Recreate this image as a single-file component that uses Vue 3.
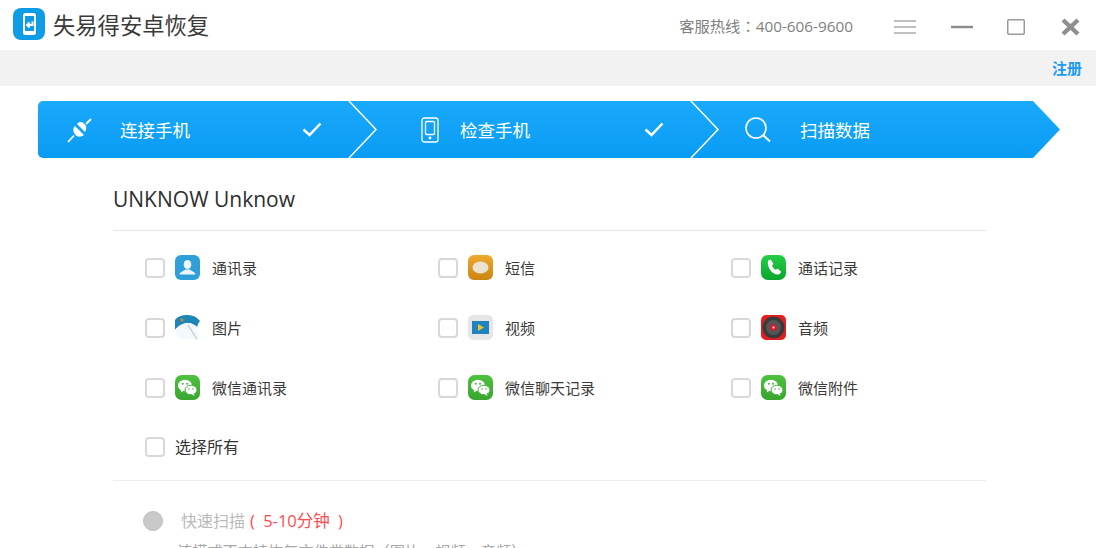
<script setup>
const rows = [
  [{ label: '通讯录', icon: 'contact' }, { label: '短信', icon: 'sms' }, { label: '通话记录', icon: 'phone' }],
  [{ label: '图片', icon: 'photo' }, { label: '视频', icon: 'video' }, { label: '音频', icon: 'audio' }],
  [{ label: '微信通讯录', icon: 'wechat' }, { label: '微信聊天记录', icon: 'wechat' }, { label: '微信附件', icon: 'wechat' }]
]
const items = rows.flat()
</script>

<template>
  <div class="page">
    <header class="titlebar">
      <div class="brand">
        <svg class="logo" viewBox="0 0 32 32" width="32" height="32">
          <rect width="32" height="32" rx="8" fill="#0e9ce6" />
          <rect x="10" y="5" width="13" height="22" rx="2.5" fill="#fff" />
          <rect x="12" y="8" width="9" height="15" fill="#0e9ce6" />
          <path d="M19.5 13.5v3.5h-5M16.5 14.5l-2.5 2.5 2.5 2.5" fill="none" stroke="#fff" stroke-width="2" />
        </svg>
        <span class="app-name">失易得安卓恢复</span>
      </div>
      <div class="win">
        <span class="hotline">客服热线：400-606-9600</span>
        <svg class="w-menu" width="22" height="14" viewBox="0 0 22 14"><path d="M0 1h22M0 7h22M0 13h22" stroke="#aaa" stroke-width="1.4" /></svg>
        <svg class="w-min" width="22" height="4" viewBox="0 0 22 4"><path d="M0 2h22" stroke="#8c8c8c" stroke-width="2.4" /></svg>
        <svg class="w-max" width="18" height="16" viewBox="0 0 18 16"><rect x=".75" y=".75" width="16.5" height="14.5" rx="1" fill="none" stroke="#9a9a9a" stroke-width="1.5" /></svg>
        <svg class="w-close" width="19" height="18" viewBox="0 0 19 18"><path d="M2 2l15 14M17 2L2 16" stroke="#8f8f8f" stroke-width="4.4" /></svg>
      </div>
    </header>

    <div class="subbar"><a class="register">注册</a></div>

    <nav class="stepper">
      <div class="step s1">
        <svg class="step-icon" width="25" height="26" viewBox="0 0 25 26" fill="#fff">
          <path d="M8 9l9 9c-2.5 2-5 2-7.5 1L7 16c-1-3-1-5 1-7zM10 7l8 8c1.5-2.5 1.5-5 .5-7L15.5 5.5C13.5 4.5 12 5 10 7z" />
          <path d="M19 7l5-5M7 18.5L1 25" stroke="#fff" stroke-width="1.8" fill="none" />
        </svg>
        <span class="step-label">连接手机</span>
        <svg class="check" width="20" height="15" viewBox="0 0 20 15"><path d="M1.5 7.5l6 5.5L18.5 1.5" fill="none" stroke="#fff" stroke-width="2.5" /></svg>
        <svg class="chevron" width="30" height="59" viewBox="0 0 30 59"><path d="M0 0l28 29.5L0 59" fill="none" stroke="#fff" stroke-width="1.5" /></svg>
      </div>
      <div class="step s2">
        <svg class="step-icon" width="18" height="26" viewBox="0 0 18 26" fill="none" stroke="#fff" stroke-width="1.3">
          <rect x="1" y="1" width="16" height="24" rx="2.5" />
          <rect x="4.5" y="4.5" width="9" height="13" rx="1" />
          <circle cx="9" cy="21" r=".8" fill="#fff" />
        </svg>
        <span class="step-label">检查手机</span>
        <svg class="check" width="20" height="15" viewBox="0 0 20 15"><path d="M1.5 7.5l6 5.5L18.5 1.5" fill="none" stroke="#fff" stroke-width="2.5" /></svg>
        <svg class="chevron" width="30" height="59" viewBox="0 0 30 59"><path d="M0 0l28 29.5L0 59" fill="none" stroke="#fff" stroke-width="1.5" /></svg>
      </div>
      <div class="step s3">
        <svg class="step-icon" width="26" height="26" viewBox="0 0 26 26" fill="none" stroke="#fff">
          <circle cx="11" cy="11" r="10" stroke-width="1.6" />
          <path d="M18 18l7 6.5" stroke-width="2" />
        </svg>
        <span class="step-label">扫描数据</span>
      </div>
    </nav>

    <main class="panel">
      <h2 class="device">UNKNOW Unknow</h2>
      <section class="types">
        <label v-for="item in items" :key="item.label" class="type">
          <span class="box"></span>
          <svg v-if="item.icon === 'contact'" class="t-icon" viewBox="0 0 25 25">
            <rect width="25" height="25" rx="6" fill="#2f9fd8" />
            <ellipse cx="12.5" cy="9.5" rx="3.8" ry="4.5" fill="#eef6fb" />
            <path d="M4.5 19.5c0-2.5 4.5-3.5 6-5h4c1.5 1.5 6 2.5 6 5z" fill="#eef6fb" />
          </svg>
          <svg v-else-if="item.icon === 'sms'" class="t-icon" viewBox="0 0 25 25">
            <defs><linearGradient id="smsg" x1="0" y1="0" x2="0" y2="1"><stop offset="0" stop-color="#eeaa2c" /><stop offset="1" stop-color="#c98412" /></linearGradient></defs>
            <rect width="25" height="25" rx="6" fill="url(#smsg)" />
            <ellipse cx="12.5" cy="12.5" rx="8" ry="6" fill="#ebe3cf" />
          </svg>
          <svg v-else-if="item.icon === 'phone'" class="t-icon" viewBox="0 0 25 25">
            <defs><linearGradient id="phg" x1="0" y1="0" x2="0" y2="1"><stop offset="0" stop-color="#25cf46" /><stop offset="1" stop-color="#0aa52e" /></linearGradient></defs>
            <rect width="25" height="25" rx="7" fill="url(#phg)" />
            <path d="M7 5.5l2.8-1 2.7 4.5-1.500 1.500c.5 1.800 2 3.500 3.800 4.300l1.700-1.300 3.500 3-1 2.500C13 21.500 5.500 13.500 7 5.500z" fill="#fff" />
          </svg>
          <svg v-else-if="item.icon === 'photo'" class="t-icon" viewBox="0 0 25 25">
            <path d="M0 5C2 2 6 0 13 0c5 0 9 2 12 6-1 1-2 3-3 6-2-2-6-4-9-4C8 8 3 11 0 15z" fill="#1f87b8" />
            <path d="M0 15c3-4 8-7 13-7 3 0 7 2 9 4 1 4 1 8 1 12H8C3 23 0 20 0 15z" fill="#f4fafc" />
            <path d="M13 10l9 14" stroke="#b5c9d1" stroke-width="1.2" />
            <circle cx="7" cy="5" r="1.5" fill="#e48220" />
          </svg>
          <svg v-else-if="item.icon === 'video'" class="t-icon" viewBox="0 0 25 25">
            <rect width="25" height="25" rx="5" fill="#e6e6e8" />
            <rect x="4" y="6" width="17" height="13" fill="#1d84c0" />
            <path d="M10 9v7l6-3.500z" fill="#f3c11b" />
          </svg>
          <svg v-else-if="item.icon === 'audio'" class="t-icon" viewBox="0 0 25 25">
            <rect width="25" height="25" rx="5" fill="#e41e1e" />
            <circle cx="12.5" cy="12.5" r="11" fill="#3a3a3a" />
            <circle cx="12.5" cy="12.5" r="7.5" fill="#555" />
            <circle cx="12.5" cy="12.5" r="3.2" fill="#e4162a" />
            <circle cx="12.5" cy="12.5" r="1" fill="#fff" />
          </svg>
          <svg v-else class="t-icon" viewBox="0 0 25 25">
            <defs><linearGradient id="wxg" x1="0" y1="0" x2="0" y2="1"><stop offset="0" stop-color="#4fc13f" /><stop offset="1" stop-color="#38a52f" /></linearGradient></defs>
            <rect width="25" height="25" rx="6.5" fill="url(#wxg)" />
            <ellipse cx="10" cy="10.5" rx="7" ry="5.8" fill="#fff" />
            <path d="M6.5 14.5l-.8 3 3.300-2z" fill="#fff" />
            <ellipse cx="16" cy="15" rx="6" ry="4.8" fill="#fff" stroke="#42b338" stroke-width="1" />
            <path d="M18.5 19l1.300 2-3.300-1.500z" fill="#fff" />
            <circle cx="7.8" cy="8.8" r="1" fill="#42b338" /><circle cx="12" cy="8.8" r="1" fill="#42b338" />
            <circle cx="14" cy="14" r=".8" fill="#42b338" /><circle cx="18" cy="14" r=".8" fill="#42b338" />
          </svg>
          <span class="t-label">{{ item.label }}</span>
        </label>
      </section>
      <label class="select-all"><span class="box"></span><span class="all-label">选择所有</span></label>
      <section class="scan">
        <div class="scan-head">
          <span class="radio"></span>
          <span class="scan-title">快速扫描</span>
          <span class="scan-time">( 5-10分钟 )</span>
        </div>
        <p class="scan-note">该模式不支持恢复文件类数据（图片、视频、音频）</p>
      </section>
    </main>
  </div>
</template>

<style>
html, body { margin: 0; background: #fff; overflow: hidden; }
</style>

<style scoped>
.page {
  width: 1096px;
  height: 548px;
  overflow: hidden;
  background: #fff;
  font-family: "Noto Sans CJK SC", "Open Sans", sans-serif;
  color: #333;
}
.titlebar {
  height: 50px;
  display: flex;
  align-items: center;
  justify-content: space-between;
  padding: 0 16px 0 13px;
}
.brand { display: flex; align-items: center; gap: 8px; margin-top: 3px; }
.logo { display: block; margin-top: -5px; }
.app-name { font-size: 22.3px; color: #3a3a3a; line-height: 30px; margin-top: -5px; }
.win { display: flex; align-items: center; margin-top: 4px; }
.hotline {
  font-family: "Open Sans", "Noto Sans CJK TC", sans-serif;
  font-size: 15.3px;
  color: #808080;
  margin: 0 41px 5px 0;
}
.w-menu { margin-right: 35px; }
.w-min { margin-right: 34px; }
.w-max { margin-right: 36px; }
.subbar {
  height: 36px;
  background: #f2f2f2;
  display: flex;
  align-items: center;
  justify-content: flex-end;
  padding-right: 14px;
}
.register { font-size: 15px; font-weight: 700; color: #1e9af0; margin-bottom: 2px; }
.stepper {
  margin: 15px 0 0 38px;
  width: 1022px;
  height: 57px;
  display: flex;
  color: #fff;
  background: linear-gradient(#19aafc, #0a9bf4);
  border-radius: 5px 0 0 5px;
  clip-path: polygon(0 0, 995px 0, 1022px 28.5px, 995px 57px, 0 57px);
}
.step { position: relative; display: flex; align-items: center; flex: none; box-sizing: border-box; }
.s1 { width: 312px; padding: 0 28px 0 29px; }
.s2 { width: 342px; padding: 0 28px 0 71px; }
.s3 { flex: 1; padding-left: 53px; }
.s1 .step-label { margin-left: 28px; }
.s2 .step-label { margin-left: 21px; }
.s3 .step-label { margin-left: 29px; }
.step-label { font-size: 17.5px; line-height: 24px; white-space: nowrap; }
.check { margin-left: auto; }
.chevron { position: absolute; right: -28px; top: -1px; }
.panel { width: 873px; margin-left: 113px; }
.device {
  margin: 0;
  height: 73px;
  box-sizing: border-box;
  padding-top: 27px;
  line-height: 28px;
  font-family: "Open Sans", "Noto Sans CJK SC", sans-serif;
  font-size: 21px;
  font-weight: 400;
  color: #2e2e2e;
  border-bottom: 1px solid #e6e6e6;
}
.types {
  display: grid;
  grid-template-columns: repeat(3, 293px);
  grid-auto-rows: 60px;
  padding: 7px 0 0 32px;
}
.type { display: flex; align-items: center; }
.box {
  flex: none;
  width: 20px;
  height: 20px;
  box-sizing: border-box;
  border: 2px solid #d8d8d8;
  border-radius: 4px;
  background: #fff;
}
.t-icon { width: 25px; height: 25px; flex: none; margin-left: 10px; margin-bottom: 1px; }
.t-label { font-size: 15px; margin: 0 0 2px 12px; color: #3a3a3a; white-space: nowrap; }
.select-all {
  display: flex;
  align-items: center;
  height: 63px;
  padding: 0 0 4px 32px;
  border-bottom: 1px solid #ececec;
  box-sizing: border-box;
}
.all-label { font-size: 16px; margin: 0 0 2px 10px; color: #333; }
.scan { padding: 25px 0 0 30px; }
.scan-head { display: flex; align-items: center; height: 30px; }
.radio {
  width: 20px;
  height: 20px;
  box-sizing: border-box;
  border-radius: 50%;
  background: #c9c9c9;
  border: 1px solid #bdbdbd;
}
.scan-title { font-size: 16px; color: #b9b9b9; margin: 0 0 2px 18px; }
.scan-time {
  font-family: "Open Sans", "Noto Sans CJK SC", sans-serif;
  font-size: 16.5px;
  word-spacing: 4px;
  color: #ff4d4f;
  margin: 0 0 2px 5px;
}
.scan-note { margin: 2px 0 0 34px; font-size: 15.2px; line-height: 24px; color: #a8a8a8; white-space: nowrap; }
</style>
